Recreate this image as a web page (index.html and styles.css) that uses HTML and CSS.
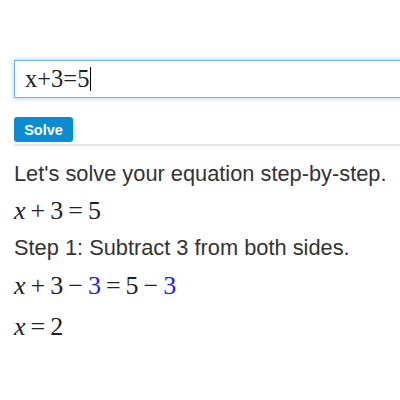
FILE: index.html
```html
<!DOCTYPE html>
<html>
<head>
<meta charset="utf-8">
<link rel="stylesheet" href="styles.css">
</head>
<body>
<div class="page">
  <div class="input"><span class="val">x+3=5</span><span class="caret"></span></div>
  <button class="solve">Solve</button>
  <div class="rule"></div>
  <p class="intro">Let's solve your equation step-by-step.</p>
  <div class="math first"><i>x</i><span class="op">+</span>3<span class="op">=</span>5</div>
  <p class="step">Step 1: Subtract 3 from both sides.</p>
  <div class="math second"><i>x</i><span class="op">+</span>3<span class="op">−</span><span class="blue">3</span><span class="op">=</span>5<span class="op">−</span><span class="blue">3</span></div>
  <div class="math last"><i>x</i><span class="op">=</span>2</div>
</div>
</body>
</html>
```
FILE: styles.css
```css
html, body {
  margin: 0;
  padding: 0;
  background: #fff;
  overflow: hidden;
}
.page {
  padding: 60px 0 0 14px;
  font-family: "Liberation Sans", Arial, sans-serif;
  color: #333;
}
.input {
  width: 420px;
  height: 36px;
  border: 1px solid #76b2ea;
  box-shadow: 0 0 5px rgba(82, 168, 236, 0.6);
  display: flex;
  align-items: center;
  padding-left: 10px;
  font-family: "Liberation Serif", "Times New Roman", serif;
  font-size: 24.5px;
  color: #222;
}
.caret {
  display: inline-block;
  width: 1px;
  height: 24px;
  background: #000;
  margin-left: 1px;
}
.solve {
  display: block;
  margin-top: 19px;
  width: 59px;
  height: 25px;
  border: none;
  border-radius: 3px;
  background: #0b8dd4;
  color: #fff;
  font-family: "Liberation Sans", Arial, sans-serif;
  font-weight: bold;
  font-size: 14.5px;
  padding: 0;
}
.rule {
  margin-top: 2px;
  height: 2px;
  background: #e6e6e6;
}
.intro, .step {
  margin: 0;
  font-size: 21.8px;
  line-height: 26px;
}
.intro { margin-top: 15px; }
.step { margin-top: 9px; }
.math {
  font-family: "Liberation Serif", "Times New Roman", serif;
  font-size: 26px;
  line-height: 30px;
  color: #222;
}
.math .op { margin: 0 5px; }
.math .blue { color: #1a1aff; }
.math.first { margin-top: 9px; }
.math.second { margin-top: 10px; }
.math.last { margin-top: 11px; }
```
